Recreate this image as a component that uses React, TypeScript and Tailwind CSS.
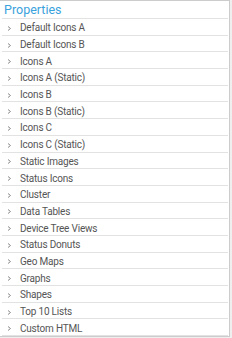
import React from 'react';

const items = [
  'Default Icons A',
  'Default Icons B',
  'Icons A',
  'Icons A (Static)',
  'Icons B',
  'Icons B (Static)',
  'Icons C',
  'Icons C (Static)',
  'Static Images',
  'Status Icons',
  'Cluster',
  'Data Tables',
  'Device Tree Views',
  'Status Donuts',
  'Geo Maps',
  'Graphs',
  'Shapes',
  'Top 10 Lists',
  'Custom HTML',
];

function Chevron() {
  return (
    <svg width="5" height="7" viewBox="0 0 5 7" className="shrink-0">
      <polyline points="1,1.5 3.5,3.5 1,5.5" fill="none" stroke="#8c8c8c" strokeWidth="1" />
    </svg>
  );
}

export default function App() {
  return (
    <div className="w-[232px] h-[338px] bg-[#efefef] overflow-hidden" style={{ fontFamily: 'Roboto, "Liberation Sans", sans-serif' }}>
      <div className="w-[230px] h-[337px] bg-white border-t border-r border-b border-[#cccccc] pl-[2px] pr-[1px] flex flex-col">
        {/* Header */}
        <div className="h-[18px] shrink-0 border-b border-[#e2e2e2] flex items-center pl-[2px] pt-[1px]">
          <span className="text-[12.5px] leading-none text-[#3aa2dc]">Properties</span>
        </div>

        {/* Palette groups */}
        <div className="flex flex-col">
          {items.map((label) => (
            <div
              key={label}
              className="h-[16.7px] shrink-0 border-b border-[#e2e2e2] flex items-center pl-[5px] gap-[8px] pt-[3px]"
            >
              <Chevron />
              <span className="text-[10px] leading-none tracking-[-0.2px] text-[#555555] whitespace-nowrap">{label}</span>
            </div>
          ))}
        </div>
      </div>
    </div>
  );
}
